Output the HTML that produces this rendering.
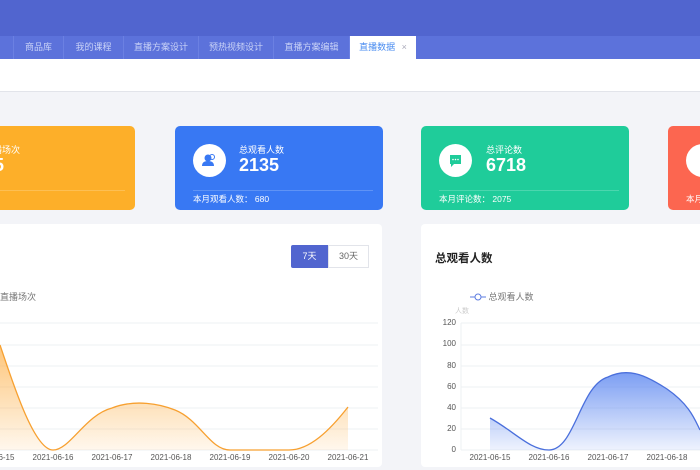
<!DOCTYPE html><html><head><meta charset="utf-8"><style>
body{margin:0;width:700px;height:470px;overflow:hidden;background:#f3f4f8;font-family:"Liberation Sans","Noto Sans CJK SC",sans-serif;position:relative}
.a{position:absolute}
.hd{left:0;top:0;width:700px;height:36px;background:#5165cf}
.tb{left:0;top:36px;width:700px;height:23px;background:#5c72db}
.tab{position:absolute;top:36px;height:23px;line-height:23px;font-size:9px;color:#c9d2f7;text-align:center;border-right:1px solid #6b80e2;box-sizing:border-box}
.card{position:absolute;top:126px;height:84px;border-radius:5px;color:#fff}
.ic{position:absolute;left:18px;top:18px;width:33px;height:33px;border-radius:50%;background:#fff}
.t1{position:absolute;left:64px;top:17px;font-size:9px}
.t2{position:absolute;left:64px;top:29px;font-size:18px;font-weight:bold}
.ln{position:absolute;left:18px;right:10px;top:64px;border-top:1px solid rgba(255,255,255,.2)}
.t3{position:absolute;left:18px;top:67px;font-size:8.5px}
.pn{position:absolute;top:224px;height:243px;background:#fff;border-radius:4px}
.xl{position:absolute;top:453px;font-size:8px;color:#555;width:50px;text-align:center}
.yl{position:absolute;left:430px;width:26px;text-align:right;font-size:8px;color:#555}
</style></head><body>
<div class="a hd"></div><div class="a tb"></div>
<div class="tab" style="left:0;width:14px"></div>
<div class="tab" style="left:14px;width:50px">商品库</div>
<div class="tab" style="left:64px;width:60px">我的课程</div>
<div class="tab" style="left:124px;width:75px">直播方案设计</div>
<div class="tab" style="left:199px;width:75px">预热视频设计</div>
<div class="tab" style="left:274px;width:76px">直播方案编辑</div>
<div class="tab" style="left:350px;width:66px;background:#fff;color:#4a8cf0;border:none">直播数据 <span style="color:#aab;margin-left:4px">×</span></div>
<div class="a" style="left:0;top:59px;width:700px;height:32px;background:#fff;border-bottom:1px solid #e2e4ea"></div>

<div class="card" style="left:-80px;width:215px;background:#fdaf29"><div class="t1">直播场次</div><div class="t2">15</div><div class="ln"></div></div>
<div class="card" style="left:175px;width:208px;background:#3878f3"><div class="ic"><svg width="33" height="33"><circle cx="15" cy="14" r="3.5" fill="#3878f3"/><path d="M9 22c0-4 3-5 6-5s6 1 6 5z" fill="#3878f3"/><circle cx="19" cy="13" r="2.5" fill="none" stroke="#3878f3"/></svg></div><div class="t1">总观看人数</div><div class="t2">2135</div><div class="ln"></div><div class="t3">本月观看人数： 680</div></div>
<div class="card" style="left:421px;width:208px;background:#1fcc9a"><div class="ic"><svg width="33" height="33"><path d="M11 11h11v9h-7l-3 3v-3h-1z" fill="#1fcc9a"/><circle cx="14" cy="15.5" r=".8" fill="#fff"/><circle cx="16.5" cy="15.5" r=".8" fill="#fff"/><circle cx="19" cy="15.5" r=".8" fill="#fff"/></svg></div><div class="t1" style="left:65px">总评论数</div><div class="t2" style="left:65px">6718</div><div class="ln"></div><div class="t3">本月评论数： 2075</div></div>
<div class="card" style="left:668px;width:100px;background:#fc6650"><div class="ic" style="left:18px"></div><div class="t3" style="left:18px">本月</div></div>

<div class="pn" style="left:-10px;width:392px"></div>
<div class="pn" style="left:421px;width:300px"></div>
<div class="a" style="left:291px;top:245px;width:37px;height:23px;background:#5165cf;color:#fff;font-size:9px;line-height:23px;text-align:center;border-radius:2px 0 0 2px">7天</div>
<div class="a" style="left:328px;top:245px;width:39px;height:21px;border:1px solid #e2e4ea;color:#666;font-size:9px;line-height:21px;text-align:center">30天</div>
<div class="a" style="left:0;top:290px;font-size:9px;color:#777">直播场次</div>
<div class="a" style="left:435px;top:250px;font-size:11.5px;font-weight:bold;color:#222">总观看人数</div>
<div class="a" style="left:470px;top:290px;font-size:9px;color:#777"><svg width="16" height="8" style="vertical-align:-1px"><line x1="0" y1="4" x2="16" y2="4" stroke="#5b7be0"/><circle cx="8" cy="4" r="3" fill="#fff" stroke="#5b7be0"/></svg> 总观看人数</div>
<div class="a" style="left:455px;top:306px;font-size:7px;color:#ccc">人数</div>

<svg class="a" style="left:0;top:0" width="700" height="470">
<defs><linearGradient id="o" x1="0" y1="0" x2="0" y2="1"><stop offset="0" stop-color="#fdb24d" stop-opacity=".75"/><stop offset="1" stop-color="#fdb24d" stop-opacity=".1"/></linearGradient>
<linearGradient id="b" x1="0" y1="0" x2="0" y2="1"><stop offset="0" stop-color="#5b86f0" stop-opacity=".8"/><stop offset="1" stop-color="#5b86f0" stop-opacity=".1"/></linearGradient></defs>
<g stroke="#eef0f3">
<line x1="0" y1="323" x2="378" y2="323"/><line x1="0" y1="345" x2="378" y2="345"/><line x1="0" y1="366" x2="378" y2="366"/><line x1="0" y1="387" x2="378" y2="387"/><line x1="0" y1="408" x2="378" y2="408"/><line x1="0" y1="429" x2="378" y2="429"/><line x1="0" y1="450" x2="378" y2="450"/>
<line x1="461" y1="323" x2="700" y2="323"/><line x1="461" y1="345" x2="700" y2="345"/><line x1="461" y1="366" x2="700" y2="366"/><line x1="461" y1="387" x2="700" y2="387"/><line x1="461" y1="408" x2="700" y2="408"/><line x1="461" y1="429" x2="700" y2="429"/><line x1="461" y1="450" x2="700" y2="450"/>
<line x1="461" y1="323" x2="461" y2="450"/></g>
<path d="M0 345C15 390 35 450 53 450C70 450 85 415 112 408C135 399 160 404 175 410C200 420 210 450 230 450L289 450C310 450 330 430 348 407L348 450L0 450Z" fill="url(#o)"/>
<path d="M0 345C15 390 35 450 53 450C70 450 85 415 112 408C135 399 160 404 175 410C200 420 210 450 230 450L289 450C310 450 330 430 348 407" fill="none" stroke="#f7a030" stroke-width="1.3"/>
<path d="M490 418C515 432 530 450 549 450C575 450 580 385 608 377C630 366 650 378 667 389C690 405 695 420 700 430L700 450L490 450Z" fill="url(#b)"/>
<path d="M490 418C515 432 530 450 549 450C575 450 580 385 608 377C630 366 650 378 667 389C690 405 695 420 700 430" fill="none" stroke="#4a6fdc" stroke-width="1.3"/>
</svg>
<div class="xl" style="left:-31px">2021-06-15</div><div class="xl" style="left:28px">2021-06-16</div><div class="xl" style="left:87px">2021-06-17</div><div class="xl" style="left:146px">2021-06-18</div><div class="xl" style="left:205px">2021-06-19</div><div class="xl" style="left:264px">2021-06-20</div><div class="xl" style="left:323px">2021-06-21</div>
<div class="xl" style="left:465px">2021-06-15</div><div class="xl" style="left:524px">2021-06-16</div><div class="xl" style="left:583px">2021-06-17</div><div class="xl" style="left:642px">2021-06-18</div>
<div class="yl" style="top:318px">120</div><div class="yl" style="top:339px">100</div><div class="yl" style="top:361px">80</div><div class="yl" style="top:382px">60</div><div class="yl" style="top:403px">40</div><div class="yl" style="top:424px">20</div><div class="yl" style="top:445px">0</div>
</body></html>
